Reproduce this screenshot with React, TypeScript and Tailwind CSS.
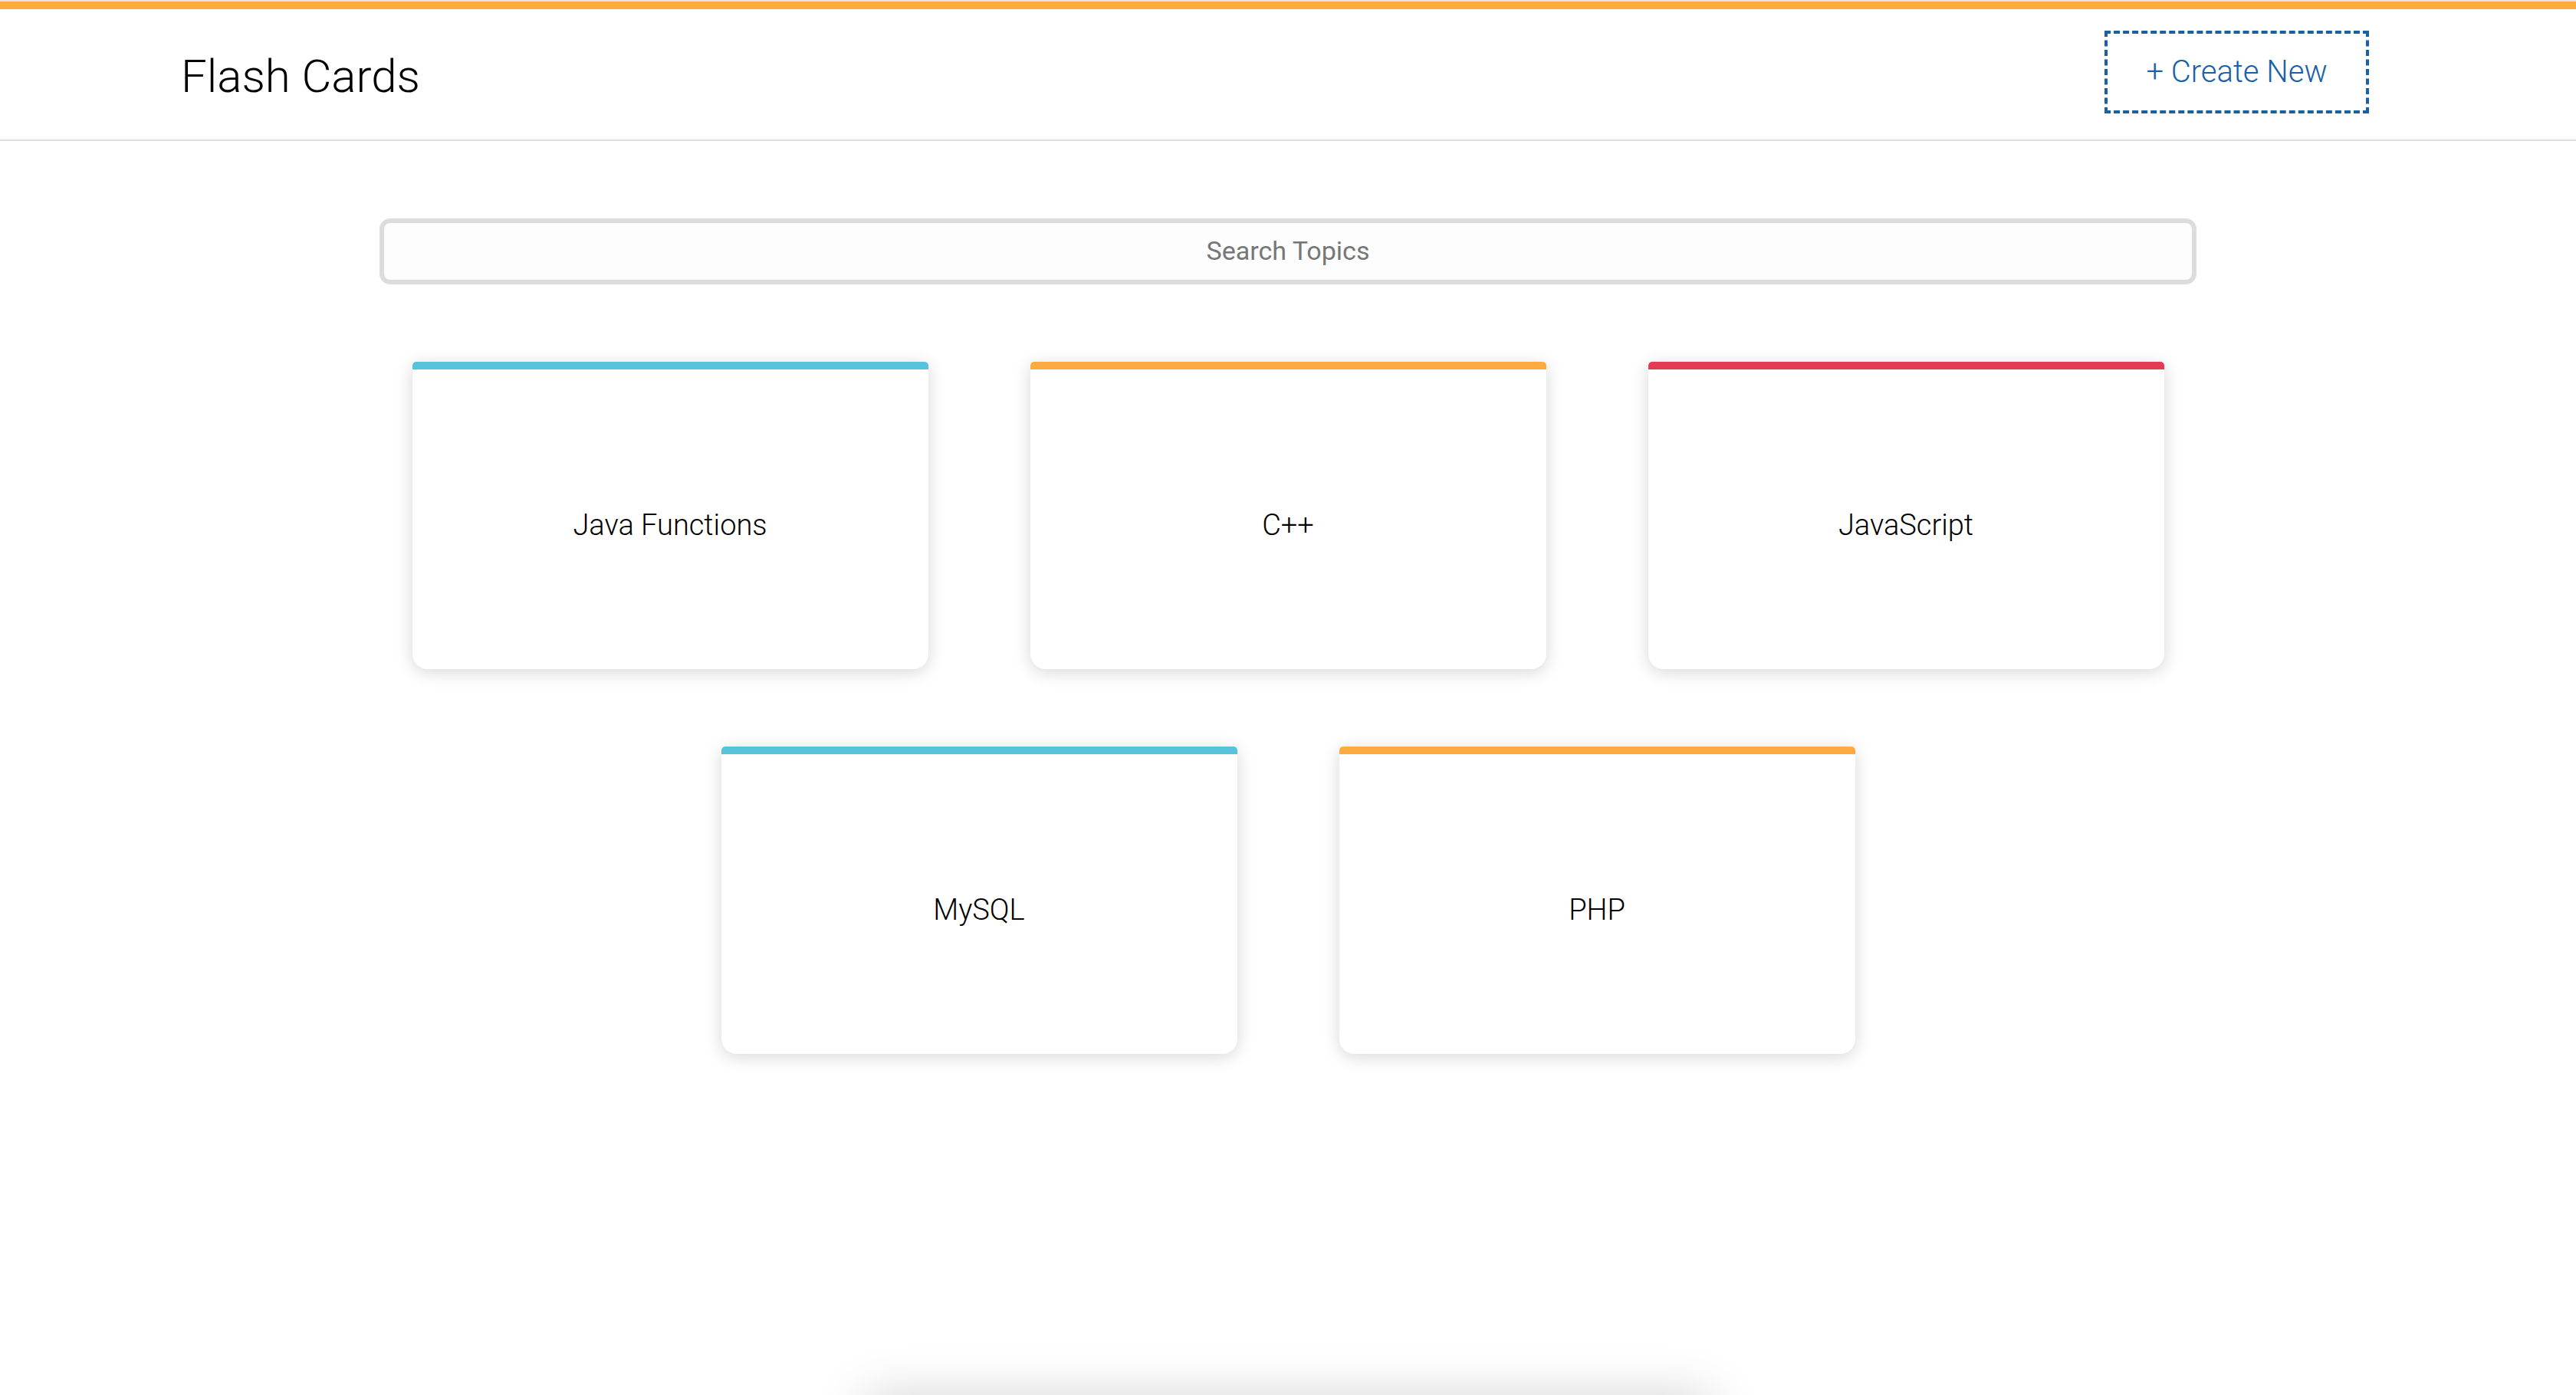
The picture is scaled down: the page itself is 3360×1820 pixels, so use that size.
import { useState } from 'react';

const TOPICS = [
  { id: 1, name: 'Java Functions', color: 'border-t-[#56c2dc]' },
  { id: 2, name: 'C++', color: 'border-t-[#fdab40]' },
  { id: 3, name: 'JavaScript', color: 'border-t-[#e33a55]' },
  { id: 4, name: 'MySQL', color: 'border-t-[#56c2dc]' },
  { id: 5, name: 'PHP', color: 'border-t-[#fdab40]' },
];

export default function App() {
  const [query, setQuery] = useState('');

  const topics = TOPICS.filter((t) => t.name.toLowerCase().includes(query.toLowerCase()));

  return (
    <div className="relative h-screen overflow-hidden bg-white font-['Roboto',sans-serif] text-black">
      <div className="h-[2px] bg-[#e2e2e2]" />
      <div className="h-[10px] bg-[#fdab40]" />

      <header className="flex h-[172px] items-center justify-between border-b-2 border-[#dedede] pl-[236px] pr-[270px]">
        <h1 className="text-[60px] font-light leading-none pt-[6px]">Flash Cards</h1>
        <button className="-mt-[6px] flex h-[108px] w-[345px] items-center justify-center border-4 border-dashed border-[#1b5fa4] text-[40px] font-light text-[#1b5fa4]">
          + Create New
        </button>
      </header>

      <main className="mx-auto flex w-[2370px] flex-col items-center pt-[101px]">
        <input
          type="text"
          value={query}
          onChange={(e) => setQuery(e.target.value)}
          placeholder="Search Topics"
          className="h-[86px] w-full rounded-[14px] border-[6px] border-[#dcdcdc] bg-[#fdfdfd] pb-[2px] text-center text-[34px] text-[#333] outline-none placeholder:text-[#777]"
        />

        <div className="mt-[101px] flex w-full flex-wrap justify-center gap-x-[133px] gap-y-[101px]">
          {topics.map((topic) => (
            <div
              key={topic.id}
              className={`flex h-[401px] w-[673px] cursor-pointer items-center justify-center rounded-t-[5px] rounded-b-[20px] border-t-[10px] bg-white pt-[16px] shadow-[0_4px_22px_rgba(0,0,0,0.16)] ${topic.color}`}
            >
              <span className="text-[38px] font-light">{topic.name}</span>
            </div>
          ))}
        </div>
      </main>

      <div className="absolute left-1/2 top-[calc(100%+6px)] h-[200px] w-[1100px] -translate-x-1/2 bg-white shadow-[0_0_70px_rgba(0,0,0,0.2)]" />
    </div>
  );
}
